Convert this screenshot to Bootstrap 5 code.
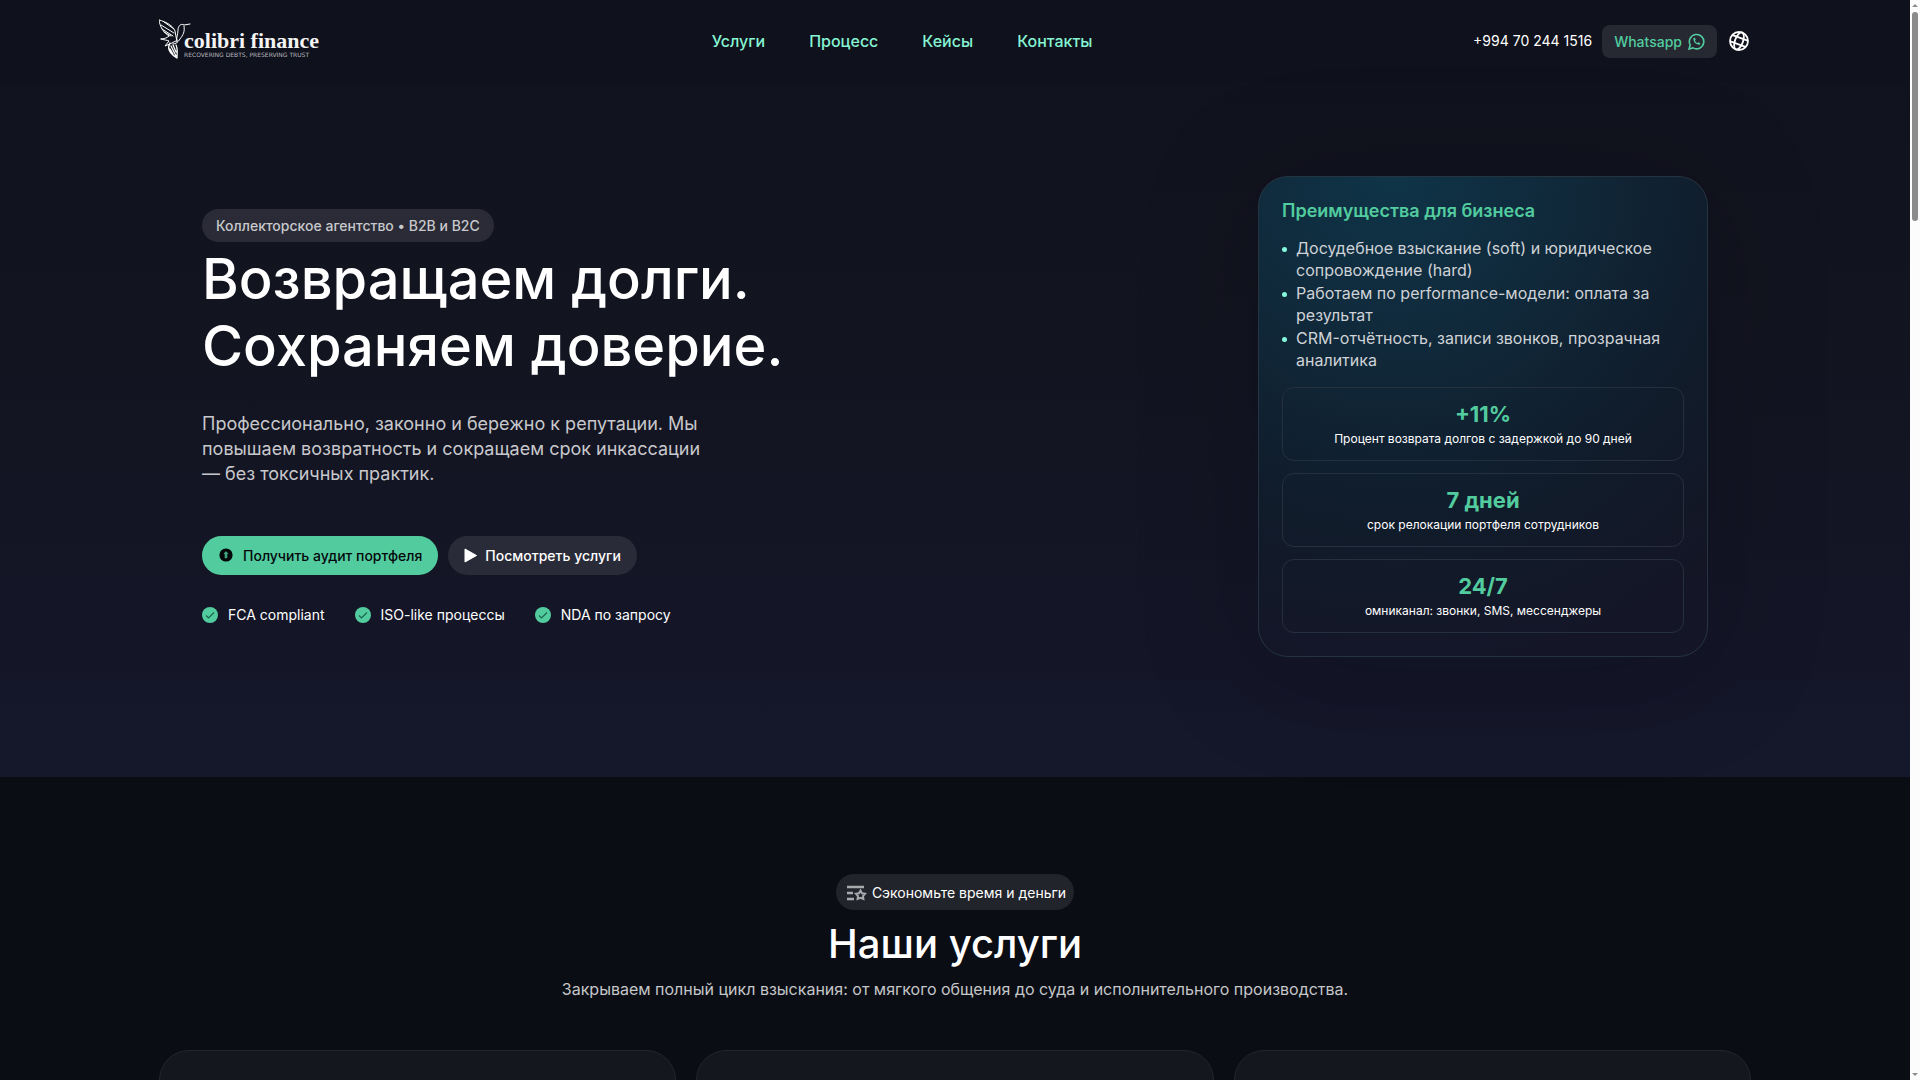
<!DOCTYPE html>
<html lang="ru">
<head>
<meta charset="utf-8">
<meta name="viewport" content="width=device-width, initial-scale=1">
<title>Colibri Finance</title>
<link href="https://cdn.jsdelivr.net/npm/bootstrap@5.3.0/dist/css/bootstrap.min.css" rel="stylesheet">
<style>
html{overflow:hidden}
body{font-family:Inter,sans-serif;background:#0a0d14;color:#fff;padding-right:10px;height:100vh;overflow:hidden}
a{text-decoration:none}
.shell{width:100%;max-width:1640px;padding:0 24px;margin:0 auto}
.hero-shell{width:100%;max-width:1554px;padding:0 24px;margin:0 auto}
.topbar{background:#0f111c;height:82px}
.brand{display:block;line-height:0;padding-right:10px}
.mainnav{gap:44px}
.mainnav a{color:#85f4d3;font-size:16px;font-weight:500;line-height:24px}
.contacts{gap:10px;padding-right:2px}
.phone{color:#fff;font-size:14px;line-height:20px}
.wa-link{background:#262832;color:#52cc9f;border-radius:8px;font-size:14px;font-weight:500;line-height:17px;padding:8px 12px;gap:6px}
.lang-btn{background:none;border:0;padding:0;line-height:0;margin-left:2px}
.hero{background:linear-gradient(#10121d,#12141f 30%,#15172b);padding:94px 0 120px}
.tag{background:#2a2b36;color:#c8c9cc;font-size:14px;font-weight:500;line-height:17px;padding:8px 14px;border-radius:20px}
.hero h1{font-size:56px;font-weight:500;line-height:67px;margin:4px 0 31px}
.lead-text{font-size:18px;line-height:25px;color:#c8c8cc;max-width:500px;margin-bottom:50px}
.actions{gap:10px}
.pill-btn{font-size:14px;font-weight:500;line-height:17px;padding:11px 16px;border-radius:20px;border:0}
.pill-go{background:#52cc9f;color:#04070a}
.pill-dim{background:#2a2b39;color:#fff}
.checks{gap:30px;margin:30px 0 0;font-size:14px;line-height:20px}
.benefit{width:450px;border:1px solid #243541;border-radius:30px;padding:23px;
 background:radial-gradient(circle at 30% 0,#0f3448 0,#10293a 30%,#101d2c 56%,rgba(19,20,36,0) 86%);
 box-shadow:0 10px 120px rgba(5,7,14,.22)}
.benefit h2{font-size:18px;font-weight:600;line-height:22px;color:#52cc9f;margin-bottom:15px}
.benefit ul{padding:0;margin:0 0 15px;list-style:none}
.benefit li{display:flex;gap:9px;font-size:16px;line-height:22px;color:#cfd2d6;padding-bottom:1px}
.benefit li::before{content:"";flex:none;width:5px;height:5px;border-radius:50%;background:#85f9dc;margin-top:10px}
.statlist{gap:12px}
.statbox{border:1px solid #26303d;border-radius:12px;padding:12px 12px 10px;text-align:center}
.statnum{font-size:22px;font-weight:700;line-height:28px;color:#52cc9f}
.statcap{font-size:12px;line-height:22px}
.services{padding-top:97px}
.tag2{background:#22242c;font-size:14px;line-height:20px;padding:9px 8px 7px;border-radius:20px}
.services h2{font-size:40px;font-weight:500;line-height:48px;margin:10px 0 10px}
.sub{font-size:16px;line-height:22px;color:#c5c6c8;margin-bottom:50px}
.svc-grid{display:grid;grid-template-columns:repeat(3,1fr);gap:20px}
.svc{height:320px;background:#14171e;border:1px solid #23262d;border-radius:30px}
.scroller{position:fixed;top:0;right:0;bottom:0;width:10px;background:#fcfcfc}
.scroller svg{display:block}
.thumb{width:6px;height:209px;border-radius:3px;background:#8b8b8b}
</style>
</head>
<body>
<header class="topbar">
 <div class="shell h-100 d-flex align-items-center justify-content-between">
  <a class="brand" href="#" aria-label="Colibri finance">
   <svg width="162" height="44" viewBox="0 0 162 44">
    <g fill="none" stroke="#fff" stroke-linecap="round" stroke-linejoin="round" stroke-width="1">
     <path d="M0 1C1 8 4 13 10 17M0 1C8 3 14 7 16 12L18 23M2 6L15 14M3 10L14 17M5 3L15 10M5 13L12 17"/>
     <path d="M2 20C5 20 8 19 10 17M2 20C5 21 8 21 10 22L6 27C10 25 14 24 17 22"/>
     <path d="M31 5L25 6C22 4 19 7 19 11C19 16 17 18 18 22M25 7C26 13 24 16 21 20C19 23 17 25 14 25"/>
     <path d="M11 24C8 29 10 34 18 39C18 34 19 30 17 26M12 27L17 37M14 26L17 33M11 30L14 35" stroke-width="1.3"/>
    </g>
    <text x="25" y="29" fill="#f4f4f4" font-family="Liberation Serif,serif" font-weight="700" font-size="22">colibri finance</text>
    <text x="25" y="38" fill="#b7b8be" font-family="DejaVu Sans,sans-serif" font-size="6">RECOVERING DEBTS, PRESERVING TRUST</text>
   </svg>
  </a>
  <nav class="mainnav d-flex" aria-label="Основное меню"><a href="#">Услуги</a><a href="#">Процесс</a><a href="#">Кейсы</a><a href="#">Контакты</a></nav>
  <div class="contacts d-flex align-items-center">
   <a class="phone" href="tel:+994702441516">+994 70 244 1516</a>
   <a class="wa-link d-flex align-items-center" href="#">Whatsapp
    <svg width="17" height="17" viewBox="0 0 17 17" fill="none" stroke="#52cc9f" stroke-width="1.6"><path d="M1 16L2.2 12A7.2 7.2 0 1 1 5 14.9Z"/><path d="M5.4 5C5 9 8 12 12 11.6L12.2 10L10.3 9.2L9.3 10C8 9.4 7.4 8.8 7 7.6L7.7 6.7L7 4.7Z" fill="#52cc9f" stroke="none"/></svg>
   </a>
   <button class="lang-btn" type="button" aria-label="Язык">
    <svg width="20" height="20" viewBox="0 0 20 20" fill="none" stroke="#fff" stroke-width="1.8"><circle cx="10" cy="10" r="9"/><g transform="rotate(20 10 10)"><ellipse cx="10" cy="10" rx="4" ry="9"/><path d="M2 6.7H18M2 13.3H18"/></g></svg>
   </button>
  </div>
 </div>
</header>
<main>
 <section class="hero">
  <div class="hero-shell d-flex align-items-center justify-content-between">
   <div>
    <span class="tag d-inline-block">Коллекторское агентство • B2B и B2C</span>
    <h1>Возвращаем долги.<br>Сохраняем доверие.</h1>
    <p class="lead-text">Профессионально, законно и бережно к репутации. Мы повышаем возвратность и сокращаем срок инкассации — без токсичных практик.</p>
    <div class="actions d-flex">
     <button class="pill-btn pill-go d-flex align-items-center gap-2" type="button"><svg width="17" height="16" viewBox="0 0 17 16"><circle cx="8" cy="8" r="6.6" fill="#04070a"/><path d="M8 4.3L10.400 6.500L9.300 7.300V11.300H6.700V7.300L5.600 6.500Z" fill="#3fa17d"/></svg>Получить аудит портфеля</button>
     <button class="pill-btn pill-dim d-flex align-items-center gap-2" type="button"><svg width="13" height="15" viewBox="0 0 13 15"><path d="M1 1V14L12.500 7.500Z" fill="#fff" stroke="#fff" stroke-linejoin="round"/></svg>Посмотреть услуги</button>
    </div>
    <ul class="checks d-flex list-unstyled">
     <li class="d-flex align-items-center"><svg class="me-2" width="18" height="16" viewBox="0 0 18 16"><circle cx="8" cy="8" r="8" fill="#52cc9f"/><path d="M4 8.5L6.5 11L12 5.5" fill="none" stroke="#17634a" stroke-width="1.1"/></svg>FCA compliant</li>
     <li class="d-flex align-items-center"><svg class="me-2" width="18" height="16" viewBox="0 0 18 16"><circle cx="8" cy="8" r="8" fill="#52cc9f"/><path d="M4 8.5L6.5 11L12 5.5" fill="none" stroke="#17634a" stroke-width="1.1"/></svg>ISO-like процессы</li>
     <li class="d-flex align-items-center"><svg class="me-2" width="18" height="16" viewBox="0 0 18 16"><circle cx="8" cy="8" r="8" fill="#52cc9f"/><path d="M4 8.5L6.5 11L12 5.5" fill="none" stroke="#17634a" stroke-width="1.1"/></svg>NDA по запросу</li>
    </ul>
   </div>
   <aside class="benefit">
    <h2>Преимущества для бизнеса</h2>
    <ul>
     <li>Досудебное взыскание (soft) и юридическое сопровождение (hard)</li>
     <li>Работаем по performance-модели: оплата за результат</li>
     <li>CRM-отчётность, записи звонков, прозрачная аналитика</li>
    </ul>
    <div class="statlist d-grid">
     <div class="statbox"><div class="statnum">+11%</div><div class="statcap">Процент возврата долгов с задержкой до 90 дней</div></div>
     <div class="statbox"><div class="statnum">7 дней</div><div class="statcap">срок релокации портфеля сотрудников</div></div>
     <div class="statbox"><div class="statnum">24/7</div><div class="statcap">омниканал: звонки, SMS, мессенджеры</div></div>
    </div>
   </aside>
  </div>
 </section>
 <section class="services">
  <div class="shell">
   <div class="d-flex flex-column align-items-center text-center">
    <span class="tag2 d-flex align-items-center gap-1"><svg width="24" height="16" viewBox="0 0 24 16" fill="none" stroke="#a9aaae" stroke-width="2.4"><path d="M3 2H20M3 8H9M3 14H10"/><path d="M16.500 5.500L18 8.300L21 8.800L19 11L19.400 14L16.500 12.800L13.600 14L14 11L12 8.800L15 8.300Z" stroke-width="2"/></svg>Сэкономьте время и деньги</span>
    <h2>Наши услуги</h2>
    <p class="sub">Закрываем полный цикл взыскания: от мягкого общения до суда и исполнительного производства.</p>
   </div>
   <div class="svc-grid"><div class="svc"></div><div class="svc"></div><div class="svc"></div></div>
  </div>
 </section>
</main>
<div class="scroller d-flex flex-column align-items-center" aria-hidden="true">
 <svg width="10" height="12" viewBox="0 0 10 12"><path d="M5 4L8 7H2Z" fill="#8b8b8b"/></svg>
 <div class="thumb"></div>
 <svg class="mt-auto" width="10" height="12" viewBox="0 0 10 12"><path d="M5 8L8 5H2Z" fill="#8b8b8b"/></svg>
</div>
<script src="https://cdn.jsdelivr.net/npm/bootstrap@5.3.0/dist/js/bootstrap.bundle.min.js"></script>
</body>
</html>
